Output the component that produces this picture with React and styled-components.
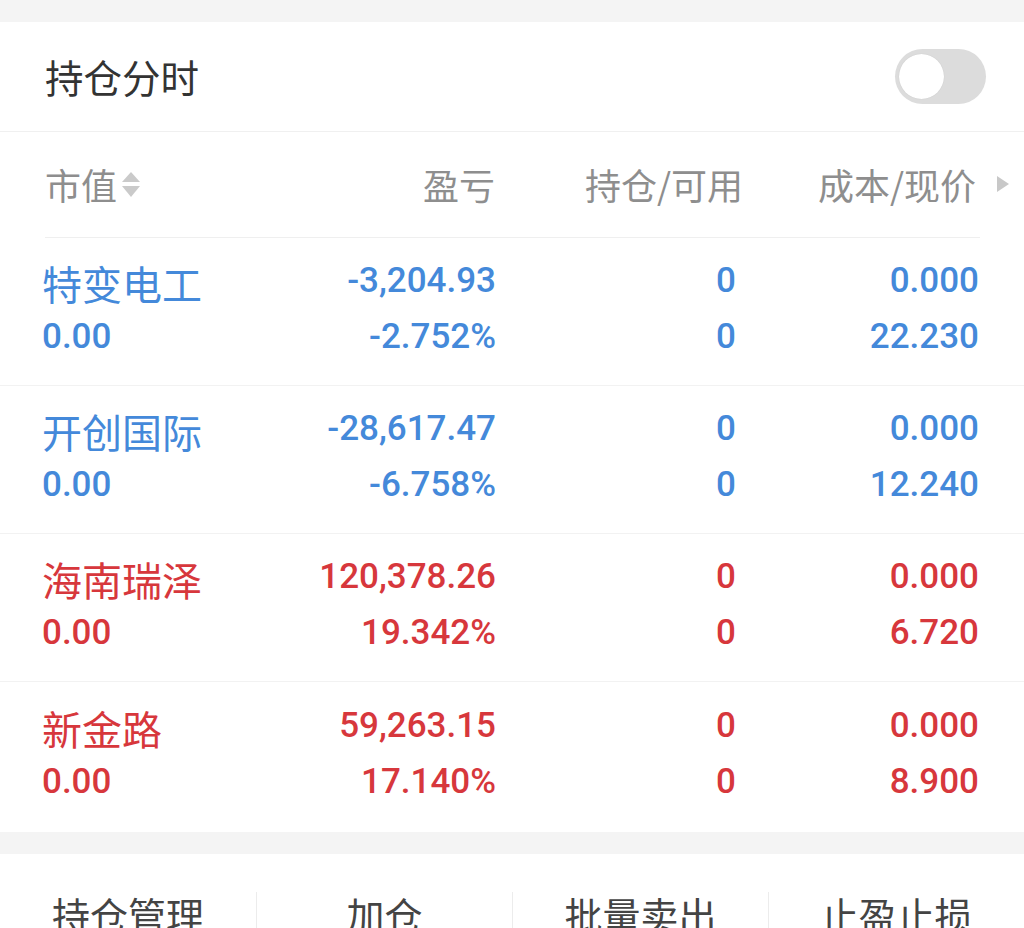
import React from "react";
import styled, { createGlobalStyle } from "styled-components";

const Global = createGlobalStyle`
  html, body { margin: 0; padding: 0; background: #f4f4f4; }
  body { font-family: "Noto Sans CJK SC", "Noto Sans", sans-serif; overflow: hidden; }
  * { box-sizing: border-box; }
`;

const Page = styled.div`
  width: 1024px;
  height: 928px;
  padding-top: 22px;
  background: #f4f4f4;
  overflow: hidden;
`;

const Card = styled.div`
  background: #fff;
`;

const TitleBar = styled.div`
  height: 110px;
  display: flex;
  align-items: center;
  justify-content: space-between;
  padding: 0 38px 0 45px;
  border-bottom: 1px solid #f0f0f0;
`;

const Title = styled.div`
  font-size: 38.5px;
  color: #333;
  padding-bottom: 2px;
`;

const Toggle = styled.div`
  width: 91px;
  height: 55px;
  border-radius: 28px;
  background: #dcdcdc;
  position: relative;
`;

const Knob = styled.div`
  position: absolute;
  left: 4px;
  top: 5px;
  width: 45px;
  height: 45px;
  border-radius: 50%;
  background: #fff;
  box-shadow: 0 0 1px rgba(0, 0, 0, 0.15);
`;

const HeadRow = styled.div`
  height: 106px;
  display: grid;
  grid-template-columns: 196px 254px 248px 1fr;
  align-items: center;
  padding: 0 14px 2px 45px;
  position: relative;
  &::after {
    content: "";
    position: absolute;
    left: 45px;
    right: 44px;
    bottom: 0;
    height: 1px;
    background: #efefef;
  }
`;

const HeadCell = styled.div`
  font-size: 36px;
  color: #8e8e8e;
  display: flex;
  align-items: center;
  justify-content: ${(p) => (p.$left ? "flex-start" : "flex-end")};
  gap: ${(p) => p.$gap || 0}px;
`;

const SortIcon = () => (
  <svg width="22" height="30" viewBox="0 0 22 30" style={{ marginLeft: 3 }}>
    <polygon points="11,3 20,13 2,13" fill="#cacaca" />
    <polygon points="2,17 20,17 11,28" fill="#cacaca" />
  </svg>
);

const ArrowRight = () => (
  <svg width="14" height="18" viewBox="0 0 14 18">
    <polygon points="1,1 13,9 1,17" fill="#c8c8c8" />
  </svg>
);

const Row = styled.div`
  height: ${(p) => (p.$last ? 150 : 148)}px;
  display: grid;
  grid-template-columns: 200px 254px 240px 243px;
  grid-template-rows: 56px 56px;
  align-content: center;
  padding: 0 45px 6px 42px;
  border-bottom: ${(p) => (p.$last ? "none" : "1px solid #f2f2f2")};
  color: ${(p) => (p.$up ? "#d7373c" : "#4489da")};
`;

const Name = styled.div`
  font-size: 40px;
  line-height: 56px;
  padding-top: 2px;
`;

const Num = styled.div`
  font-family: Roboto, "Liberation Sans", sans-serif;
  font-size: 35px;
  font-weight: 500;
  line-height: 56px;
  text-align: ${(p) => (p.$left ? "left" : "right")};
`;

const Gap = styled.div`
  height: 22px;
  background: #f4f4f4;
`;

const Actions = styled.div`
  background: #fff;
  height: 80px;
  display: grid;
  grid-template-columns: repeat(4, 1fr);
  padding-top: 38px;
`;

const Action = styled.div`
  font-size: 38px;
  color: #444;
  text-align: center;
  line-height: 44px;
  border-left: ${(p) => (p.$first ? "none" : "1px solid #ececec")};
  height: 60px;
`;

const rows = [
  { name: "特变电工", mv: "0.00", pl: "-3,204.93", pct: "-2.752%", cost: "0.000", price: "22.230", up: false },
  { name: "开创国际", mv: "0.00", pl: "-28,617.47", pct: "-6.758%", cost: "0.000", price: "12.240", up: false },
  { name: "海南瑞泽", mv: "0.00", pl: "120,378.26", pct: "19.342%", cost: "0.000", price: "6.720", up: true },
  { name: "新金路", mv: "0.00", pl: "59,263.15", pct: "17.140%", cost: "0.000", price: "8.900", up: true },
];

export default function App() {
  return (
    <Page>
      <Global />
      <Card>
        <TitleBar>
          <Title>持仓分时</Title>
          <Toggle>
            <Knob />
          </Toggle>
        </TitleBar>
        <HeadRow>
          <HeadCell $left>
            市值
            <SortIcon />
          </HeadCell>
          <HeadCell>盈亏</HeadCell>
          <HeadCell>持仓/可用</HeadCell>
          <HeadCell $gap={20}>
            成本/现价
            <ArrowRight />
          </HeadCell>
        </HeadRow>
        {rows.map((r, i) => (
          <Row key={r.name} $up={r.up} $last={i === rows.length - 1}>
            <Name>{r.name}</Name>
            <Num>{r.pl}</Num>
            <Num>0</Num>
            <Num>{r.cost}</Num>
            <Num $left>{r.mv}</Num>
            <Num>{r.pct}</Num>
            <Num>0</Num>
            <Num>{r.price}</Num>
          </Row>
        ))}
      </Card>
      <Gap />
      <Actions>
        <Action $first>持仓管理</Action>
        <Action>加仓</Action>
        <Action>批量卖出</Action>
        <Action>止盈止损</Action>
      </Actions>
    </Page>
  );
}
